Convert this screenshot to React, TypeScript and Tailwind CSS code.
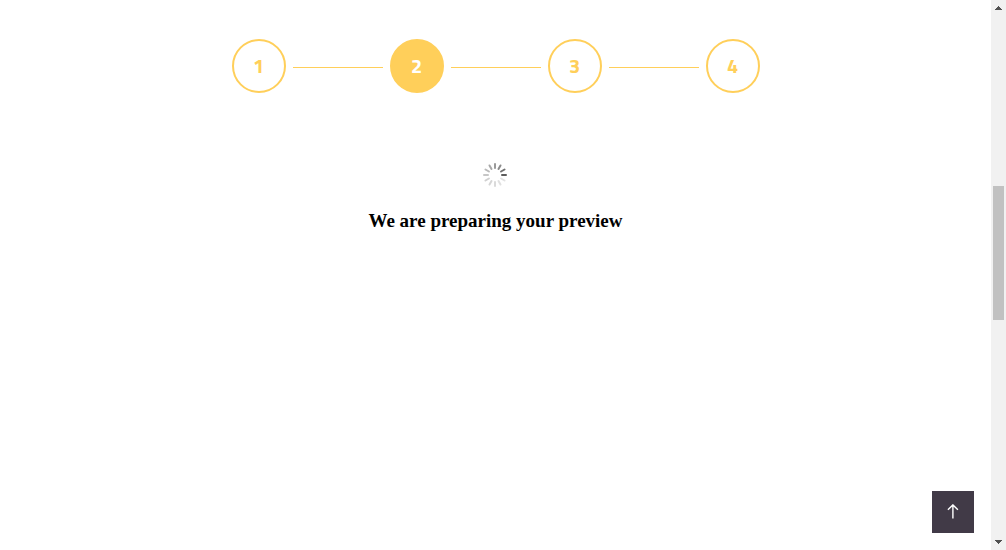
const steps = [1, 2, 3, 4];
const currentStep = 2;

const spokes = [
  { angle: 0, shade: '#999999' },
  { angle: 30, shade: '#8c8c8c' },
  { angle: 60, shade: '#707070' },
  { angle: 90, shade: '#5c5c5c' },
  { angle: 120, shade: '#e2e2e2' },
  { angle: 150, shade: '#e0e0e0' },
  { angle: 180, shade: '#dadada' },
  { angle: 210, shade: '#d6d6d6' },
  { angle: 240, shade: '#d0d0d0' },
  { angle: 270, shade: '#c6c6c6' },
  { angle: 300, shade: '#bababa' },
  { angle: 330, shade: '#a8a8a8' },
];

function Steps() {
  return (
    <ol className="flex items-center justify-center gap-[7px]">
      {steps.map((step) => (
        <li key={step} className="flex items-center gap-[7px]">
          {step > 1 && <span className="mt-0.5 h-px w-[90px] bg-[#ffcf5a]" />}
          <span
            aria-current={step === currentStep ? 'step' : undefined}
            className={`flex size-[54px] items-center justify-center rounded-full border-2 border-[#ffcf5a] font-['Titillium_Web','Noto_Sans',sans-serif] text-xl font-bold ${
              step === currentStep ? 'bg-[#ffcf5a] text-white' : 'text-[#ffcf5a]'
            }`}
          >
            {step}
          </span>
        </li>
      ))}
    </ol>
  );
}

function Spinner() {
  return (
    <svg viewBox="-12 -12 25 24" className="h-6 w-[25px]" role="img" aria-label="Loading">
      {spokes.map(({ angle, shade }) => (
        <line
          key={angle}
          x1="0"
          y1="-7"
          x2="0"
          y2="-11"
          stroke={shade}
          strokeWidth="2"
          strokeLinecap="round"
          transform={`rotate(${angle})`}
        />
      ))}
    </svg>
  );
}

function ScrollRail() {
  return (
    <div aria-hidden="true" className="flex w-[15px] shrink-0 flex-col items-center bg-[#f1f1f1]">
      <svg viewBox="0 0 15 17" className="h-[17px] w-[15px]" shapeRendering="crispEdges">
        <path d="M7 6h1v1h1v1h1v1h1v1H4V9h1V8h1V7h1z" fill="#505050" />
      </svg>
      <div className="grow-[169]" />
      <div className="w-[11px] grow-[134] bg-[#c1c1c1]" />
      <div className="grow-[213]" />
      <svg viewBox="0 0 15 17" className="h-[17px] w-[15px]" shapeRendering="crispEdges">
        <path d="M4 7h7v1h-1v1H9v1H8v1H7v-1H6V9H5V8H4z" fill="#505050" />
      </svg>
    </div>
  );
}

export default function App() {
  return (
    <div className="flex min-h-screen bg-white">
      <main className="flex grow flex-col items-center pt-[39px]">
        <Steps />
        <div className="mt-[70px] flex flex-col items-center gap-5">
          <Spinner />
          <h3 className="font-['Liberation_Serif',serif] text-[19px] leading-7 font-bold text-black">
            We are preparing your preview
          </h3>
        </div>
      </main>
      <button
        type="button"
        aria-label="Back to top"
        className="fixed right-8 bottom-[17px] flex size-[42px] items-center justify-center bg-[#413a47] text-white"
      >
        <svg viewBox="0 0 16 16" className="size-4" fill="none" stroke="currentColor" strokeWidth="1.4">
          <path d="M7.9 14.5V.9M2.9 5.7l5-4.8 5 4.8" />
        </svg>
      </button>
      <ScrollRail />
    </div>
  );
}
